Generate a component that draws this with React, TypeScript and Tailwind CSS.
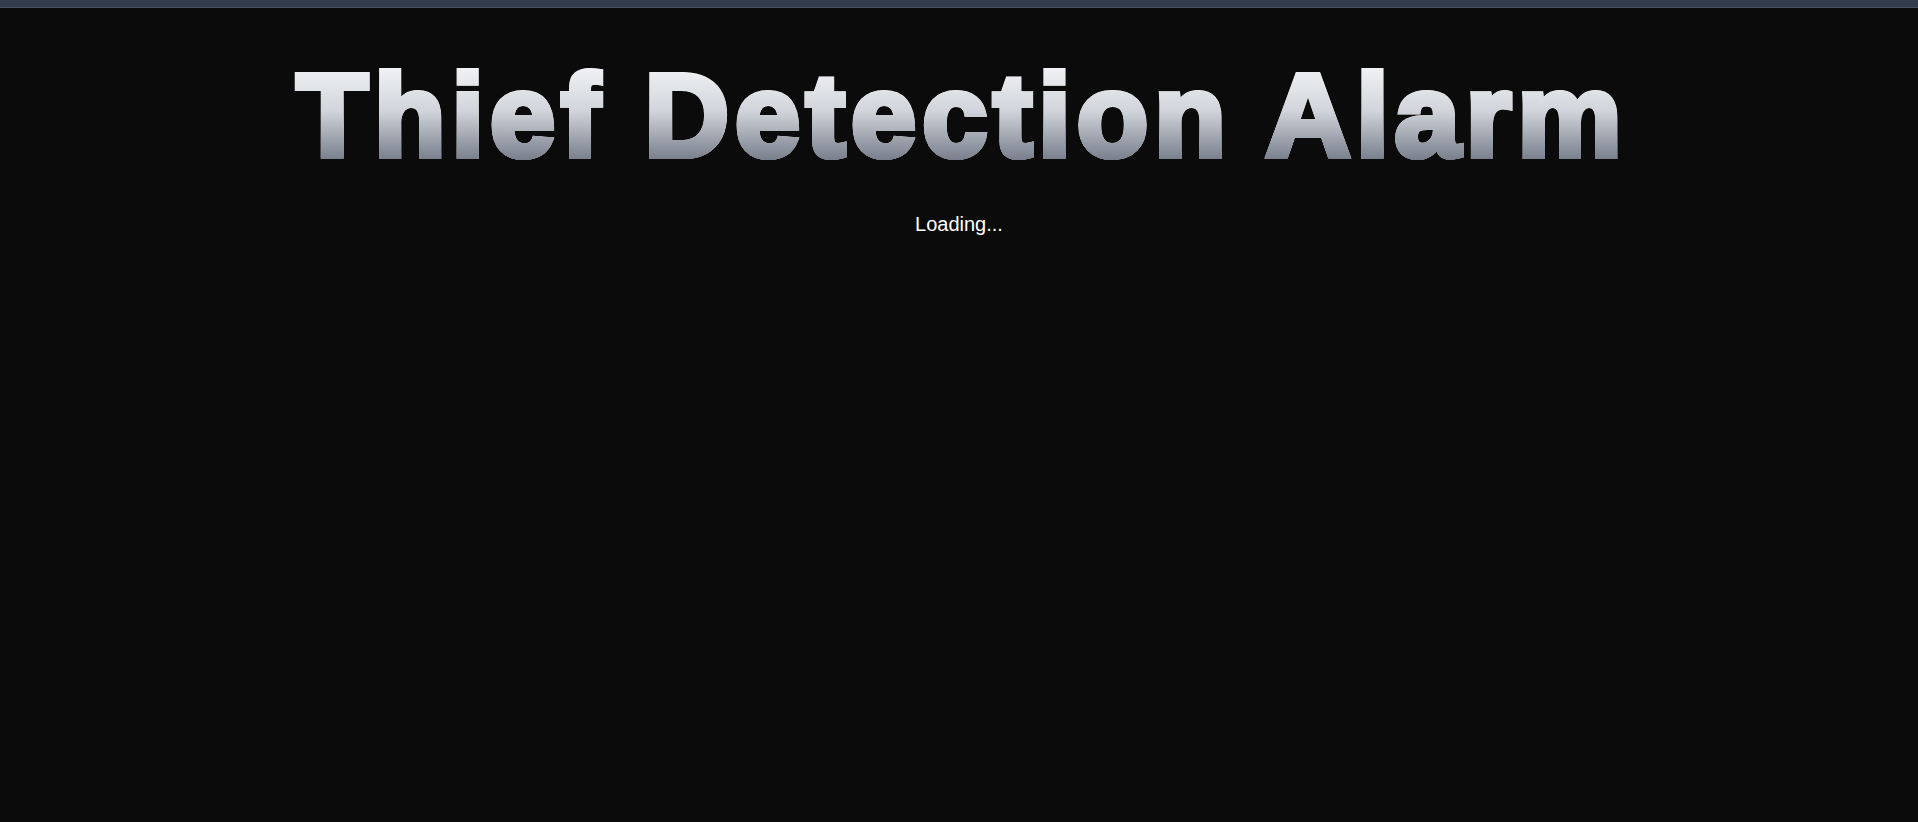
export default function App() {
  return (
    <div className="min-h-screen bg-[#0b0b0b] flex flex-col" style={{ fontFamily: '"Liberation Sans", Arial, sans-serif' }}>
      {/* Top bar */}
      <div className="h-[8px] bg-[#343d4e] border-b border-[#4a5263]" />

      <main className="flex flex-col items-center pt-[56px]">
        {/* Heavy gradient title: white text tinted by a darken-blended gradient */}
        <div className="relative isolate bg-[#0b0b0b]">
          <h1 className="text-[117px] leading-[104px] font-bold tracking-[6px] text-white [-webkit-text-stroke:6px_white] pl-[6px]">
            Thief Detection Alarm
          </h1>
          <div className="absolute inset-0 pointer-events-none bg-gradient-to-b from-[#f3f4f6] via-[#d1d5db] via-45% to-[#6b7280] mix-blend-darken" />
        </div>
        <p className="mt-[42px] text-xl text-white">Loading...</p>
      </main>
    </div>
  );
}
